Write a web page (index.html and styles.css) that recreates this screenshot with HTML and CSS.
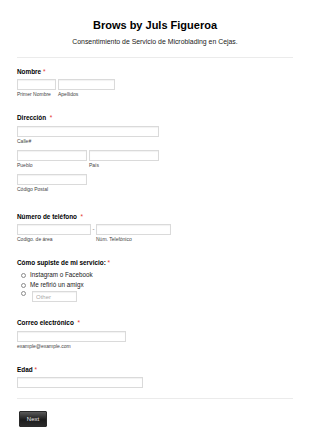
FILE: index.html
```html
<!DOCTYPE html>
<html lang="es">
  <head>
    <meta charset="UTF-8" />
    <meta name="viewport" content="width=device-width, initial-scale=1.0" />
    <title>Brows by Juls Figueroa</title>
    <link rel="stylesheet" href="styles.css">
  </head>
  <body>
    <form class="formulario">
      <header class="cabecera">
        <h1>Brows by Juls Figueroa</h1>
        <p>Consentimiento de Servicio de Microblading en Cejas.</p>
      </header>

      <div class="campo">
        <label class="etiqueta">Nombre <span class="req">*</span></label>
        <div class="fila">
          <div class="parte">
            <input type="text" class="caja ancho-39" />
            <span class="sub">Primer Nombre</span>
          </div>
          <div class="parte">
            <input type="text" class="caja ancho-56" />
            <span class="sub">Apellidos</span>
          </div>
        </div>
      </div>

      <div class="campo campo-direccion">
        <label class="etiqueta">Dirección &nbsp;<span class="req">*</span></label>
        <div class="fila">
          <div class="parte">
            <input type="text" class="caja ancho-142" />
            <span class="sub">Calle#</span>
          </div>
        </div>
        <div class="fila">
          <div class="parte">
            <input type="text" class="caja ancho-70" />
            <span class="sub">Pueblo</span>
          </div>
          <div class="parte">
            <input type="text" class="caja ancho-70" />
            <span class="sub">País</span>
          </div>
        </div>
        <div class="fila">
          <div class="parte">
            <input type="text" class="caja ancho-70" />
            <span class="sub">Código Postal</span>
          </div>
        </div>
      </div>

      <div class="campo">
        <label class="etiqueta">Número de teléfono &nbsp;<span class="req">*</span></label>
        <div class="fila fila-tel">
          <div class="parte">
            <input type="text" class="caja ancho-74" />
            <span class="sub">Codigo. de área</span>
          </div>
          <span class="guion">-</span>
          <div class="parte">
            <input type="text" class="caja ancho-75" />
            <span class="sub">Núm. Telefónico</span>
          </div>
        </div>
      </div>

      <div class="campo">
        <label class="etiqueta">Cómo supiste de mi servicio: <span class="req">*</span></label>
        <ul class="opciones">
          <li><span class="radio"></span>Instagram o Facebook</li>
          <li><span class="radio"></span>Me refirió un amigx</li>
          <li class="otro"><span class="radio"></span><input type="text" class="caja ancho-45" placeholder="Other" /></li>
        </ul>
      </div>

      <div class="campo">
        <label class="etiqueta">Correo electrónico &nbsp;<span class="req">*</span></label>
        <div class="parte">
          <input type="text" class="caja ancho-109" />
          <span class="sub">example@example.com</span>
        </div>
      </div>

      <div class="campo campo-ultimo">
        <label class="etiqueta">Edad <span class="req">*</span></label>
        <input type="text" class="caja ancho-126" />
      </div>

      <div class="botones">
        <button type="button" class="siguiente">Next</button>
      </div>
    </form>
  </body>
</html>
```

FILE: styles.css
```css
* {
  box-sizing: border-box;
}

body {
  margin: 0;
  background: #fff;
  font-family: "Liberation Sans", Arial, sans-serif;
  color: #111;
}

.formulario {
  width: 276px;
  margin-left: 17px;
}

.cabecera {
  text-align: center;
  padding-top: 18px;
  padding-bottom: 11px;
  border-bottom: 1px solid #ebebeb;
}

.cabecera h1 {
  margin: 0;
  font-size: 11px;
  line-height: 14px;
  font-weight: bold;
  color: #000;
}

.cabecera p {
  margin: 4.5px 0 0;
  font-size: 6.9px;
  line-height: 9px;
  color: #222;
}

.campo {
  padding: 10px 0 17px;
}

.campo + .campo {
  padding-top: 0;
}

.campo-direccion {
  padding-bottom: 21px;
}

.campo-ultimo {
  padding-bottom: 10px;
}

.etiqueta {
  display: block;
  font-size: 6.4px;
  line-height: 8px;
  font-weight: bold;
  color: #000;
  margin-bottom: 3.5px;
}

.req {
  color: #e4322b;
  font-weight: normal;
}

.fila {
  display: flex;
  gap: 2px;
}

.fila + .fila {
  margin-top: 6px;
}

.fila-tel {
  gap: 0;
}

.guion {
  width: 5px;
  text-align: center;
  font-size: 6px;
  line-height: 11px;
  color: #555;
}

.parte {
  display: flex;
  flex-direction: column;
}

.caja {
  display: block;
  height: 11px;
  margin: 0;
  padding: 0 3px;
  border: 1px solid #dadada;
  border-radius: 0;
  background: #fff;
  box-shadow: inset 0 1px 1px #f2f2f2;
  font-family: "Liberation Sans", Arial, sans-serif;
  font-size: 6px;
}

.caja::placeholder {
  color: #aaa;
}

.ancho-39 { width: 39px; }
.ancho-56 { width: 57px; }
.ancho-142 { width: 142px; }
.ancho-70 { width: 70px; }
.ancho-74 { width: 74px; }
.ancho-75 { width: 75px; }
.ancho-45 { width: 45px; }
.ancho-109 { width: 109px; }
.ancho-126 { width: 126px; }

.sub {
  margin-top: 1px;
  font-size: 5px;
  line-height: 6px;
  color: #444;
}

.opciones {
  list-style: none;
  margin: -0.5px 0 0;
  padding: 0 0 0 4px;
}

.opciones li {
  display: flex;
  align-items: center;
  font-size: 6.3px;
  line-height: 10px;
  color: #222;
}

.opciones .otro {
  align-items: flex-start;
  margin-top: 1px;
}

.radio {
  width: 5px;
  height: 5px;
  margin-right: 4px;
  border: 1px solid #8c8c8c;
  border-radius: 50%;
  background: #fff;
}

.otro .radio {
  margin-top: 0;
  margin-right: 6px;
}

.botones {
  border-top: 1px solid #ebebeb;
  padding: 12px 0 0 2px;
}

.siguiente {
  display: block;
  width: 28px;
  height: 16px;
  padding: 0;
  border: 1px solid #2a2a2a;
  border-radius: 1px;
  background: linear-gradient(#5a5a5a, #1c1c1c 55%, #2b2b2b);
  color: #eee;
  font-family: "Liberation Sans", Arial, sans-serif;
  font-size: 6px;
}
```
